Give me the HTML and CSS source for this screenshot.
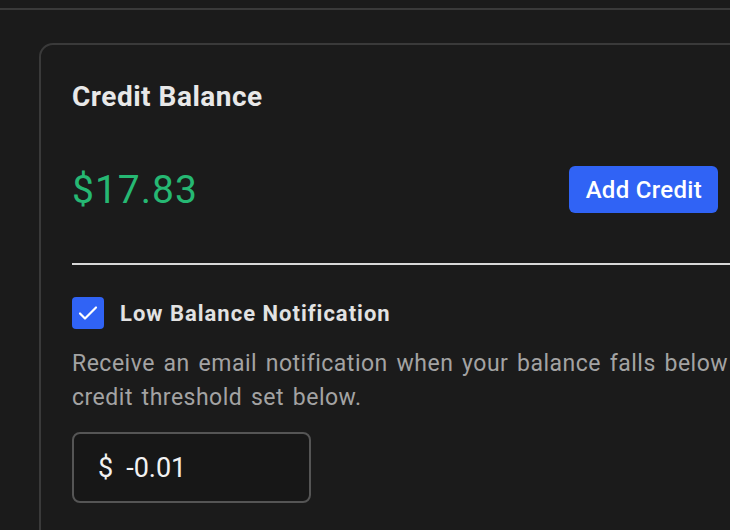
FILE: index.html
```html
<!DOCTYPE html>
<html lang="en">
<head>
  <meta charset="UTF-8" />
  <meta name="viewport" content="width=device-width, initial-scale=1.0" />
  <title>Billing</title>
  <link rel="stylesheet" href="styles.css">
</head>
<body>
  <div class="topbar"></div>

  <div class="page">
    <!-- Credit balance card -->
    <div class="card">
      <h2 class="card-title">Credit Balance</h2>

      <div class="balance-row">
        <span class="balance">$17.83</span>
        <button class="btn-primary">Add Credit</button>
      </div>

      <hr class="divider" />

      <label class="check-row">
        <span class="checkbox">
          <svg width="32" height="32" viewBox="0 0 32 32">
            <polyline points="8,16.5 13,21.5 24,10.5" fill="none" stroke="#fff" stroke-width="2.2" stroke-linecap="round" stroke-linejoin="round" />
          </svg>
        </span>
        <span class="check-label">Low Balance Notification</span>
      </label>

      <p class="hint">Receive an email notification when your balance falls below the credit threshold set below.</p>

      <div class="amount-input">
        <span class="prefix">$</span>
        <span class="value">-0.01</span>
      </div>
    </div>
  </div>
</body>
</html>
```

FILE: styles.css
```css
body {
  margin: 0;
  background: #1b1b1b;
  font-family: Roboto, "Liberation Sans", sans-serif;
  overflow: hidden;
}
.topbar {
  height: 8px;
  border-bottom: 2px solid #3a3a3a;
}
.page {
  padding: 33px 0 0 39px;
}
.card {
  width: 760px;
  height: 600px;
  border: 2px solid #3a3a3a;
  border-radius: 14px;
  padding: 0 0 0 31px;
  background: #1b1b1b;
}
.card-title {
  margin: 0;
  padding-top: 35px;
  font-size: 28px;
  line-height: 34px;
  font-weight: 700;
  letter-spacing: 0.5px;
  color: #e8e8e8;
}
.balance-row {
  display: flex;
  align-items: center;
  justify-content: space-between;
  margin-top: 52px;
  width: 646px;
}
.balance {
  font-size: 39px;
  letter-spacing: 1px;
  color: #26b873;
}
.btn-primary {
  height: 47px;
  padding: 0 16px 0 17px;
  background: #3063f5;
  color: #fff;
  border: none;
  border-radius: 6px;
  font-family: inherit;
  font-size: 24px;
  font-weight: 500;
  letter-spacing: 0.3px;
}
.divider {
  margin: 50px 0 0 0;
  border: none;
  border-top: 2px solid #d8d8d8;
}
.check-row {
  display: flex;
  align-items: center;
  gap: 16px;
  margin-top: 32px;
}
.checkbox {
  display: flex;
  width: 32px;
  height: 32px;
  border-radius: 4px;
  background: #3063f5;
}
.check-label {
  font-size: 22px;
  font-weight: 700;
  letter-spacing: 1px;
  color: #e2e2e2;
}
.hint {
  margin: 18px 0 0 0;
  width: 720px;
  font-size: 23px;
  line-height: 34px;
  letter-spacing: 0.5px;
  word-spacing: 2.5px;
  color: #a3a3a3;
}
.amount-input {
  display: flex;
  align-items: center;
  gap: 13px;
  box-sizing: border-box;
  width: 239px;
  height: 71px;
  margin-top: 17px;
  padding-left: 24px;
  border: 2px solid #555;
  border-radius: 8px;
  background: #171717;
  font-size: 27px;
  color: #f2f2f2;
}
```
